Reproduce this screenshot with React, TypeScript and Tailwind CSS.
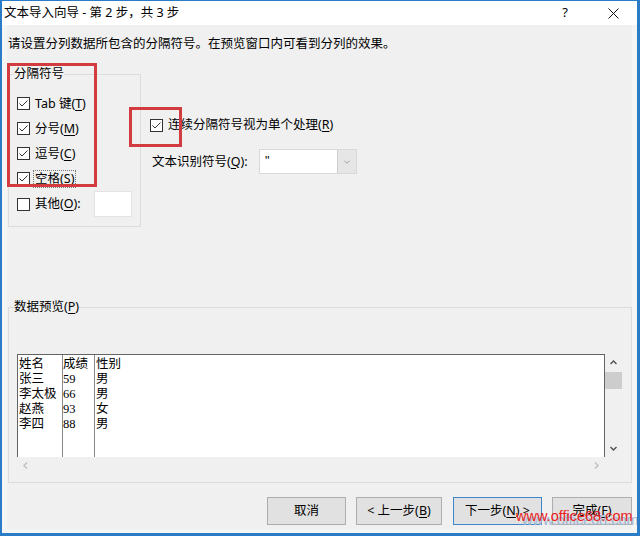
import React from "react";

const U = ({ c }: { c: string }) => <span className="underline underline-offset-2">{c}</span>;

function Check({ checked }: { checked: boolean }) {
  return (
    <span className="w-[13px] h-[13px] border border-[#333] bg-white flex items-center justify-center shrink-0">
      {checked && (
        <svg width="11" height="11" viewBox="0 0 11 11">
          <polyline points="1.5,5.5 4,8 9.5,2.5" fill="none" stroke="#333" strokeWidth="1" />
        </svg>
      )}
    </span>
  );
}

function Chevron({ dir, color, size = 9, sw = 1.4 }: { dir: "up" | "down" | "left" | "right"; color: string; size?: number; sw?: number }) {
  const pts: Record<string, string> = {
    up: "1.5,6 4.5,3 7.5,6",
    down: "1.5,3 4.5,6 7.5,3",
    left: "6,1.5 3,4.5 6,7.5",
    right: "3,1.5 6,4.5 3,7.5",
  };
  return (
    <svg width={size} height={size} viewBox="0 0 9 9">
      <polyline points={pts[dir]} fill="none" stroke={color} strokeWidth={sw} />
    </svg>
  );
}

const rows = [
  ["姓名", "成绩", "性别"],
  ["张三", "59", "男"],
  ["李太极", "66", "男"],
  ["赵燕", "93", "女"],
  ["李四", "88", "男"],
];

export default function App() {
  return (
    <div className="relative w-[640px] h-[536px] overflow-hidden border-t border-l-2 border-r-[3px] border-b-[3px] border-[#2b7cc7] bg-white flex flex-col text-[12.5px] text-black font-['Noto_Sans','Noto_Sans_CJK_SC',sans-serif]">
      {/* Title bar */}
      <div className="h-[24px] bg-white flex items-center shrink-0">
        <span className="pl-[2px] leading-4 text-[12.5px] whitespace-pre">文本导入向导 - 第 2 步，共 3 步</span>
        <div className="ml-auto flex h-full mr-[1px]">
          <div className="w-[46px] flex items-center justify-center text-[13px] pr-[4px]">?</div>
          <div className="w-[46px] flex items-center justify-center">
            <svg width="11" height="11" viewBox="0 0 11 11">
              <path d="M0.5 0.5 L10.5 10.5 M10.5 0.5 L0.5 10.5" stroke="#111" strokeWidth="1" />
            </svg>
          </div>
        </div>
      </div>

      {/* Body */}
      <div className="flex-1 bg-[#f0f0f0] border-l-[5px] border-r-[5px] border-b-[4px] border-[#f5f5f5] flex flex-col">
        <div className="mt-[11px] pl-[1px] leading-4 whitespace-nowrap">请设置分列数据所包含的分隔符号。在预览窗口内可看到分列的效果。</div>

        <div className="mt-[14px] flex items-start">
          <fieldset className="ml-[1px] w-[133px] border border-[#dcdcdc] pb-[9px]">
            <legend className="ml-[5px] leading-4">分隔符号</legend>
            <div className="pl-[8px] pt-[9px] flex flex-col">
              <div className="h-[25px] flex items-center">
                <Check checked />
                <span className="ml-[5px] leading-4 whitespace-nowrap">Tab 键(<U c="T" />)</span>
              </div>
              <div className="h-[25px] flex items-center">
                <Check checked />
                <span className="ml-[5px] leading-4">分号(<U c="M" />)</span>
              </div>
              <div className="h-[25px] flex items-center">
                <Check checked />
                <span className="ml-[5px] leading-4">逗号(<U c="C" />)</span>
              </div>
              <div className="h-[25px] flex items-center">
                <Check checked />
                <span className="ml-[4px] leading-4 outline-1 outline-dotted outline-[#777] px-[1px]">空格(<U c="S" />)</span>
              </div>
              <div className="h-[26px] flex items-center">
                <Check checked={false} />
                <span className="ml-[5px] w-[59px] leading-4 whitespace-nowrap">其他(<U c="O" />):</span>
                <div className="w-[38px] h-[26px] bg-white border border-[#e3e3e3]" />
              </div>
            </div>
          </fieldset>

          <div className="ml-[9px] pt-[51px] flex flex-col">
            <div className="h-[16px] flex items-center">
              <Check checked />
              <span className="ml-[5px] leading-4 whitespace-nowrap">连续分隔符号视为单个处理(<U c="R" />)</span>
            </div>
            <div className="mt-[16px] h-[25px] flex items-center">
              <span className="ml-[2px] w-[107px] leading-4 whitespace-nowrap">文本识别符号(<U c="Q" />):</span>
              <div className="w-[98px] h-[25px] bg-white border border-[#d9d9d9] flex">
                <span className="pl-[5px] flex-1 leading-[22px] font-['Liberation_Sans',sans-serif]">"</span>
                <div className="w-[19px] h-full bg-[#e6e6e6] border-l border-[#cfcfcf] flex items-center justify-center">
                  <Chevron dir="down" color="#9a9a9a" size={8} sw={1} />
                </div>
              </div>
            </div>
          </div>
        </div>

        {/* Data preview */}
        <fieldset className="mt-[72px] ml-[1px] w-[624px] border border-[#dcdcdc] pl-[8px] pr-[9px] pb-[8px]">
          <legend className="ml-[-3px] leading-4">数据预览(<U c="P" />)</legend>
          <div className="pt-[39px] flex flex-col">
            <div className="flex">
              <div className="w-[588px] h-[103px] bg-white border-t border-l border-r border-[#646464] flex text-[12.5px] font-['Liberation_Serif','Noto_Sans_CJK_SC',serif] leading-[15px]">
                <div className="w-[44px] pl-[1px] pt-[2px]">
                  {rows.map((r) => (
                    <div key={r[0]} className="h-[15px] whitespace-nowrap">{r[0]}</div>
                  ))}
                </div>
                <div className="w-[32px] border-l border-[#8a8a8a] pt-[2px]">
                  {rows.map((r) => (
                    <div key={r[0]} className="h-[15px] whitespace-nowrap">{r[1]}</div>
                  ))}
                </div>
                <div className="flex-1 border-l border-[#8a8a8a] pl-[1px] pt-[2px]">
                  {rows.map((r) => (
                    <div key={r[0]} className="h-[15px] whitespace-nowrap">{r[2]}</div>
                  ))}
                </div>
              </div>
              <div className="w-[17px] h-[103px] flex flex-col">
                <div className="h-[17px] flex items-center justify-center">
                  <Chevron dir="up" color="#505050" />
                </div>
                <div className="mt-[1px] h-[17px] bg-[#cdcdcd]" />
                <div className="mt-auto h-[17px] flex items-center justify-center">
                  <Chevron dir="down" color="#505050" />
                </div>
              </div>
            </div>
            <div className="flex">
              <div className="w-[588px] h-[17px] flex items-center justify-between">
                <div className="w-[17px] h-[17px] flex items-center justify-center">
                  <Chevron dir="left" color="#bfbfbf" />
                </div>
                <div className="w-[17px] h-[17px] flex items-center justify-center">
                  <Chevron dir="right" color="#bfbfbf" />
                </div>
              </div>
              <div className="w-[17px] h-[17px]" />
            </div>
          </div>
        </fieldset>

        {/* Buttons */}
        <div className="mt-[14px] flex justify-end">
          <button className="w-[79px] h-[28px] border border-[#adadad] bg-[#e1e1e1] leading-4">取消</button>
          <button className="ml-[10px] w-[86px] h-[28px] border border-[#adadad] bg-[#e1e1e1] leading-4 whitespace-nowrap">&lt; 上一步(<U c="B" />)</button>
          <button className="ml-[11px] w-[89px] h-[28px] border border-[#3d86cb] bg-[#e1e1e1] leading-4 whitespace-nowrap">下一步(<U c="N" />) &gt;</button>
          <button className="ml-[10px] w-[80px] h-[28px] border border-[#adadad] bg-[#e1e1e1] leading-4 whitespace-nowrap">完成(<U c="F" />)</button>
        </div>
      </div>

      {/* Red highlight boxes */}
      <div className="absolute left-[5px] top-[62px] w-[90px] h-[124px] border-[3px] border-[#d23b40]" />
      <div className="absolute left-[127px] top-[106px] w-[53px] h-[40px] border-[3px] border-[#d23b40]" />

      {/* Watermark */}
      <div className="absolute left-[520px] top-[511px] text-[14.5px] leading-[17px] text-[#9fb6d3] font-['Liberation_Sans',sans-serif] whitespace-nowrap">www.office68.com</div>
      <div className="absolute left-[514px] top-[507px] text-[14.5px] leading-[17px] text-[#ea2020] font-['Liberation_Sans',sans-serif] whitespace-nowrap">www.office68.com</div>
    </div>
  );
}
